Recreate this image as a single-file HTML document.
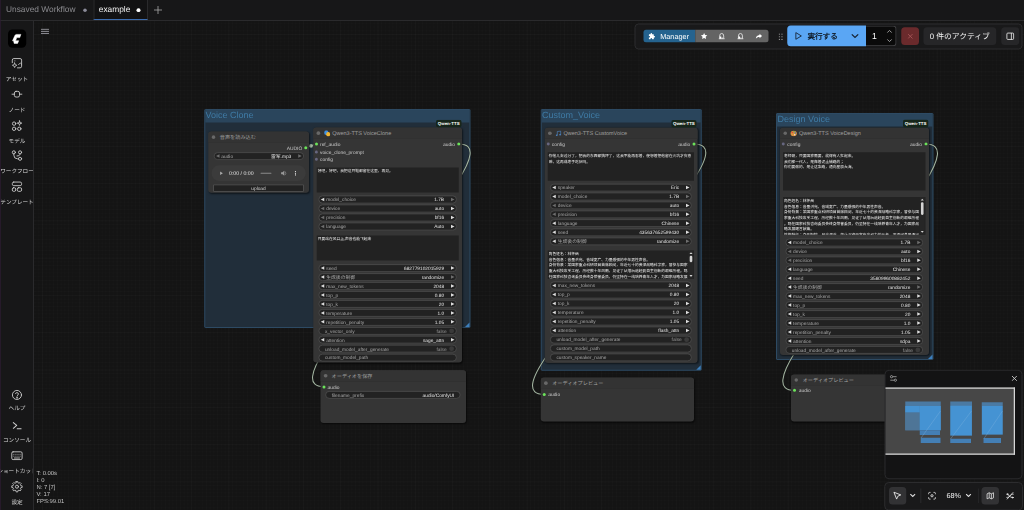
<!DOCTYPE html>
<html lang="ja"><head><meta charset="utf-8"><title>ComfyUI</title>
<style>
*{box-sizing:border-box;margin:0;padding:0}
html,body{width:1024px;height:510px;overflow:hidden;background:#141414}
body{font-family:"Liberation Sans","Noto Sans CJK JP",sans-serif;color:#ddd;position:relative}
#root{position:absolute;left:0;top:0;width:4096px;height:2040px;transform:scale(.25);transform-origin:0 0;overflow:hidden;text-rendering:geometricPrecision}

.abs{position:absolute}
#grid{position:absolute;left:136px;top:84px;width:3960px;height:1956px;
 background-image:linear-gradient(rgba(255,255,255,.012) 4px,transparent 4px),linear-gradient(90deg,rgba(255,255,255,.012) 4px,transparent 4px),linear-gradient(rgba(255,255,255,.010) 4px,transparent 4px),linear-gradient(90deg,rgba(255,255,255,.010) 4px,transparent 4px);
 background-size:149.2px 149.2px,149.2px 149.2px,14.92px 14.92px,14.92px 14.92px;background-position:32px 52px}
#tabs{position:absolute;left:0;top:0;width:4096px;height:84px;background:#171718;border-bottom:4px solid #2a2a2c}
.tab{position:absolute;top:0;height:80px;font-size:33.4px;line-height:76px;white-space:nowrap}
#side{position:absolute;left:0;top:84px;width:136px;height:1956px;background:#171718;border-right:4px solid #2a2a2c;overflow:hidden}
.sl{position:absolute;left:-40px;width:216px;text-align:center;font-size:22.4px;line-height:32px;color:#d8d8d8;white-space:nowrap}
.si{position:absolute;left:43.2px;width:49.6px;height:49.6px}
.si svg{width:49.6px;height:49.6px;display:block;fill:none;stroke:#d0d0d0;stroke-width:1.7;stroke-linecap:round;stroke-linejoin:round}
.group{position:absolute;background:#212e3a;border:4px solid #2d4a63;border-radius:4px}
.gt{position:absolute;left:0;top:0;right:0;background:#2a455c}
.gtt{position:absolute;left:1.6px;white-space:nowrap;color:#3f7ba5;font-size:36px}
.gc{position:absolute;right:0;bottom:0;width:0;height:0;border-style:solid;border-width:0 0 18px 18px;border-color:transparent transparent #3d7fbc transparent}
.node{position:absolute;background:#353535;border-radius:12.8px;box-shadow:3.2px 3.2px 8px rgba(0,0,0,.55)}
.nt{position:absolute;left:0;top:0;right:0;background:#333;border-radius:12.8px 12.8px 0 0;border-bottom:2px solid #2b2b2b}
.ntd{position:absolute;width:14.4px;height:14.4px;border-radius:50%;background:#686868}
.ntt{position:absolute;white-space:nowrap;color:#a0a0a0;font-size:22px;line-height:32px}
.ntt.jp{font-size:20.6px}
.badge{position:absolute;background:#16261a;border-radius:8px;color:#fff;font-weight:bold;font-size:17.6px;line-height:30.4px;text-align:center;white-space:nowrap}
.dot{position:absolute;width:12px;height:12px;border-radius:50%}
.sl_l,.sl_r{position:absolute;white-space:nowrap;font-size:19.6px;line-height:28px;color:#cacaca}
.sl_r{text-align:right}
.w{position:absolute;height:31.2px;border-radius:15.6px;background:#222;border:3px solid #505050;font-size:19.2px;line-height:25.2px;white-space:nowrap}
.w .l{position:absolute;left:27.6px;top:1.4px;color:#a8a8a8}
.w .v{position:absolute;right:47.6px;top:1.4px;color:#e6e6e6}
.w.na .l{left:22.4px}
.w.na .v{right:22px}
.w i{position:absolute;top:5.6px;width:0;height:0;border-style:solid}
.w i.a{left:6px;border-width:7px 14px 7px 0;border-color:transparent #ddd transparent transparent}
.w i.b{right:6px;border-width:7px 0 7px 14px;border-color:transparent transparent transparent #ddd}
.w i.a.d{border-right-color:#6e6e6e}
.w i.b.d{border-left-color:#6e6e6e}
.w .tg{position:absolute;right:8px;top:3.2px;width:18.8px;height:18.8px;border-radius:50%;background:#3a3a3a}
.w.tgw .v{right:37.2px;color:#9c9c9c}
.ta{position:absolute;background:#222;color:#f0f0f0;font-family:"Liberation Sans","Noto Sans CJK SC",sans-serif;font-size:15px;line-height:22.8px;padding:3.8px 3.6px;overflow:hidden;white-space:nowrap}
.sb{position:absolute;right:2.6px;top:0;bottom:0;width:20px;background:#262626}
</style></head>
<body>
<div id="root">
<div id="grid"></div>
<div class="group" style="left:816.8px;top:435.6px;width:1064.8px;height:876.8px"><div class="gt" style="height:50px"></div><div class="gtt" style="top:-3.2px;line-height:48px">Voice Clone</div><div class="gc"></div></div>
<div class="group" style="left:2162.8px;top:435.6px;width:644px;height:1047.2px"><div class="gt" style="height:50px"></div><div class="gtt" style="top:-3.2px;line-height:48px">Custom_Voice</div><div class="gc"></div></div>
<div class="group" style="left:3104px;top:451.6px;width:629.6px;height:988.8px"><div class="gt" style="height:50px"></div><div class="gtt" style="top:-3.2px;line-height:48px">Design Voice</div><div class="gc"></div></div>
<svg class="abs" style="left:0;top:0;width:4096px;height:2040px" viewBox="0 0 1024 510" fill="none"><path d="M458.8 144.0 C528.2 144.0 254.5 386.7 323.9 386.7" stroke="#1a1a1a" stroke-width="1.9" opacity=".5"/><path d="M458.8 144.0 C528.2 144.0 254.5 386.7 323.9 386.7" stroke="#a3b5a1" stroke-width="1.05"/><path d="M694.1 144.0 C767.1 144.0 471.2 394.4 544.2 394.4" stroke="#1a1a1a" stroke-width="1.9" opacity=".5"/><path d="M694.1 144.0 C767.1 144.0 471.2 394.4 544.2 394.4" stroke="#a3b5a1" stroke-width="1.05"/><path d="M925.9 144.0 C995.7 144.0 724.6 390.3 794.4 390.3" stroke="#1a1a1a" stroke-width="1.9" opacity=".5"/><path d="M925.9 144.0 C995.7 144.0 724.6 390.3 794.4 390.3" stroke="#a3b5a1" stroke-width="1.05"/><path d="M305.7 147.8 C308.5 147.8 313.6 144.0 316.4 144.0" stroke="#1a1a1a" stroke-width="1.9" opacity=".5"/><path d="M305.7 147.8 C308.5 147.8 313.6 144.0 316.4 144.0" stroke="#a3b5a1" stroke-width="1.05"/><circle cx="311" cy="145.8" r="1.9" fill="#a3b5a1"/></svg>
<div class="node" style="left:833.2px;top:526.4px;width:402.4px;height:244.8px"><div class="nt" style="height:44.8px"></div><div class="ntd" style="left:13.6px;top:14.8px"></div><div class="ntt jp" style="left:46px;top:7.2px">音声を読み込む</div></div>
<div class="sl_r" style="right:2887.2px;top:578.4px">AUDIO</div>
<div class="dot" style="left:1216.8px;top:585.2px;width:12px;height:12px;background:#6be35a"></div>
<div class="w" style="left:854.8px;top:608.8px;width:360.8px"><i class="a d"></i><span class="l">audio</span><span class="v">雷军.mp3</span><i class="b d"></i></div>
<div class="abs" style="left:846px;top:661.2px;width:376.8px;height:62.8px;border-radius:31.2px;background:#3b3b3b"></div>
<svg class="abs" style="left:846px;top:661.2px;width:376.8px;height:62.8px" viewBox="0 0 94.2 15.7"><path d="M8.6 6.2 L8.6 9.8 L11.4 8Z" fill="#aaa"/><rect x="49" y="7.6" width="11" height="0.9" rx="0.4" fill="#8a8a8a"/><path d="M69.6 7 h1.4 l1.8 -1.5 v5 l-1.8 -1.5 h-1.4z" fill="#999"/><path d="M73.6 6.2 q1.6 1.8 0 3.6" stroke="#999" stroke-width=".6" fill="none"/><circle cx="84" cy="6.3" r=".6" fill="#eee"/><circle cx="84" cy="8" r=".6" fill="#eee"/><circle cx="84" cy="9.7" r=".6" fill="#eee"/></svg>
<div class="abs" style="left:916px;top:678.8px;font-size:20.8px;line-height:28px;color:#e0e0e0;white-space:nowrap">0:00 / 0:00</div>
<div class="abs" style="left:852.8px;top:738px;width:362.4px;height:29.2px;background:#222;border:3px solid #585858"></div><div class="abs" style="left:852.8px;top:738px;width:362.4px;font-size:19.2px;line-height:29.2px;text-align:center;color:#d4d4d4">upload</div>
<div class="node" style="left:1252.8px;top:510.4px;width:595.2px;height:939.2px"><div class="nt" style="height:44.8px"></div><div class="ntd" style="left:13.6px;top:14.8px"></div><div class="ntt" style="left:76px;top:7.2px">Qwen3-TTS VoiceClone</div></div>
<svg class="abs" style="left:1295.6px;top:520.8px;width:25.6px;height:25.6px" viewBox="0 0 6.4 6.4"><ellipse cx="2.3" cy="2.4" rx="2.1" ry="2.3" fill="#3f8fe0"/><ellipse cx="4.2" cy="4" rx="2" ry="2.2" fill="#f2b632"/></svg>
<div class="badge" style="left:1743.6px;top:478.8px;width:102.4px;height:30.4px">Qwen-TTS</div>
<div class="dot" style="left:1259.6px;top:570px;width:12px;height:12px;background:#6be35a"></div>
<div class="sl_l" style="left:1280px;top:561.6px">ref_audio</div>
<div class="dot" style="left:1259.8px;top:602.2px;width:11.6px;height:11.6px;background:#676780"></div>
<div class="sl_l" style="left:1280px;top:593.6px">voice_clone_prompt</div>
<div class="dot" style="left:1259.8px;top:631px;width:11.6px;height:11.6px;background:#676780"></div>
<div class="sl_l" style="left:1280px;top:622.4px">config</div>
<div class="sl_r" style="right:2276px;top:561.6px">audio</div>
<div class="dot" style="left:1829.2px;top:570px;width:12px;height:12px;background:#6be35a"></div>
<div class="ta" style="left:1267.2px;top:669.6px;width:568px;height:100.8px;padding-top:3.8px">好吧，好吧，我把这只鞋都留在这里，再见。</div>
<div class="w" style="left:1274.4px;top:782.4px;width:552.4px"><i class="a"></i><span class="l">model_choice</span><span class="v">1.7B</span><i class="b d"></i></div>
<div class="w" style="left:1274.4px;top:818.4px;width:552.4px"><i class="a d"></i><span class="l">device</span><span class="v">auto</span><i class="b"></i></div>
<div class="w" style="left:1274.4px;top:854.4px;width:552.4px"><i class="a d"></i><span class="l">precision</span><span class="v">bf16</span><i class="b"></i></div>
<div class="w" style="left:1274.4px;top:890.4px;width:552.4px"><i class="a d"></i><span class="l">language</span><span class="v">Auto</span><i class="b"></i></div>
<div class="ta" style="left:1267.2px;top:942px;width:568px;height:100px;padding-top:3.8px">只要站在风口上,声音也能飞起来</div>
<div class="w" style="left:1274.4px;top:1056.8px;width:552.4px"><i class="a"></i><span class="l">seed</span><span class="v">682779102015929</span><i class="b"></i></div>
<div class="w" style="left:1274.4px;top:1092.8px;width:552.4px"><i class="a"></i><span class="l">生成後の制御</span><span class="v">randomize</span><i class="b d"></i></div>
<div class="w" style="left:1274.4px;top:1128.4px;width:552.4px"><i class="a"></i><span class="l">max_new_tokens</span><span class="v">2048</span><i class="b"></i></div>
<div class="w" style="left:1274.4px;top:1164.4px;width:552.4px"><i class="a"></i><span class="l">top_p</span><span class="v">0.80</span><i class="b"></i></div>
<div class="w" style="left:1274.4px;top:1200px;width:552.4px"><i class="a"></i><span class="l">top_k</span><span class="v">20</span><i class="b"></i></div>
<div class="w" style="left:1274.4px;top:1236px;width:552.4px"><i class="a"></i><span class="l">temperature</span><span class="v">1.0</span><i class="b"></i></div>
<div class="w" style="left:1274.4px;top:1271.6px;width:552.4px"><i class="a"></i><span class="l">repetition_penalty</span><span class="v">1.05</span><i class="b"></i></div>
<div class="w na tgw" style="left:1274.4px;top:1307.6px;width:552.4px"><span class="l">x_vector_only</span><span class="v">false</span><span class="tg"></span></div>
<div class="w" style="left:1274.4px;top:1343.2px;width:552.4px"><i class="a"></i><span class="l">attention</span><span class="v">sage_attn</span><i class="b"></i></div>
<div class="w na tgw" style="left:1274.4px;top:1379.2px;width:552.4px"><span class="l">unload_model_after_generate</span><span class="v">false</span><span class="tg"></span></div>
<div class="w na" style="left:1274.4px;top:1414.8px;width:552.4px"><span class="l">custom_model_path</span></div>
<div class="node" style="left:1281.6px;top:1480.8px;width:582.8px;height:210.8px"><div class="nt" style="height:44.8px"></div><div class="ntd" style="left:13.6px;top:14.8px"></div><div class="ntt jp" style="left:44.8px;top:7.2px">オーディオを保存</div></div>
<div class="dot" style="left:1289.6px;top:1541.6px;width:12px;height:12px;background:#6be35a"></div>
<div class="sl_l" style="left:1310.4px;top:1534px">audio</div>
<div class="w na" style="left:1301.2px;top:1564px;width:541.2px"><span class="l">filename_prefix</span><span class="v">audio/ComfyUI</span></div>
<div class="node" style="left:2178.8px;top:511.2px;width:611.6px;height:940.8px"><div class="nt" style="height:44.8px"></div><div class="ntd" style="left:13.6px;top:14.8px"></div><div class="ntt" style="left:75.2px;top:7.2px">Qwen3-TTS CustomVoice</div></div>
<svg class="abs" style="left:2221.6px;top:520.8px;width:25.6px;height:25.6px" viewBox="0 0 6.4 6.4"><path d="M1.8 5 V1.3 L5.2 0.8 V4.5" stroke="#4d86c4" stroke-width=".65" fill="none"/><ellipse cx="1.2" cy="5.1" rx=".95" ry=".75" fill="#4d86c4"/><ellipse cx="4.6" cy="4.6" rx=".95" ry=".75" fill="#4d86c4"/></svg>
<div class="badge" style="left:2685.2px;top:480px;width:100.8px;height:30px">Qwen-TTS</div>
<div class="dot" style="left:2187px;top:570.2px;width:11.6px;height:11.6px;background:#676780"></div>
<div class="sl_l" style="left:2207.2px;top:561.6px">config</div>
<div class="sl_r" style="right:1334.8px;top:561.6px">audio</div>
<div class="dot" style="left:2770.4px;top:570px;width:12px;height:12px;background:#6be35a"></div>
<div class="ta" style="left:2191.2px;top:608.8px;width:585.2px;height:114px;padding-top:3.8px">你他儿太过分了，把我的东西都搞坏了，这我不能再忍着，便想着把他留在火坑才安息<br>嘛，这再成老子吃狱吗。</div>
<div class="w" style="left:2200.4px;top:734.8px;width:566.8px"><i class="a"></i><span class="l">speaker</span><span class="v">Eric</span><i class="b"></i></div>
<div class="w" style="left:2200.4px;top:770.4px;width:566.8px"><i class="a"></i><span class="l">model_choice</span><span class="v">1.7B</span><i class="b d"></i></div>
<div class="w" style="left:2200.4px;top:806px;width:566.8px"><i class="a d"></i><span class="l">device</span><span class="v">auto</span><i class="b"></i></div>
<div class="w" style="left:2200.4px;top:841.6px;width:566.8px"><i class="a d"></i><span class="l">precision</span><span class="v">bf16</span><i class="b"></i></div>
<div class="w" style="left:2200.4px;top:877.2px;width:566.8px"><i class="a"></i><span class="l">language</span><span class="v">Chinese</span><i class="b"></i></div>
<div class="w" style="left:2200.4px;top:913.6px;width:566.8px"><i class="a"></i><span class="l">seed</span><span class="v">435637652599430</span><i class="b"></i></div>
<div class="w" style="left:2200.4px;top:949.6px;width:566.8px"><i class="a"></i><span class="l">生成後の制御</span><span class="v">randomize</span><i class="b d"></i></div>
<div class="ta" style="left:2191.2px;top:1002px;width:585.2px;height:114px;padding-top:2px">角色姓名：林怀岳<br>音色信息：音量洪亮、音域宽广、力量感强的中年男性声音。<br>身份背景：某国家重点科研项目首席顾问，年近七十的资深战略科学家，曾参与国家<br>重大科技攻关工程，历经数十年风雨，见证了从落后追赶到自主创新的艰难历程。现<br>任国家科技咨询委员会终身荣誉委员，仍坚持在一线培养青年人才，为国家战略发展<div class="sb"><svg viewBox="0 0 5 28.5" style="display:block;width:20px;height:114px"><path d="M1 3.600 L2.500 1.700 L4 3.600Z" fill="#d8d8d8"/><rect x="1.200" y="5.300" width="2.600" height="6.4" rx="1.100" fill="#d4d4d4"/><path d="M1 24.6 L2.500 26.4 L4 24.6Z" fill="#d8d8d8"/></svg></div></div>
<div class="w" style="left:2200.4px;top:1126.4px;width:566.8px"><i class="a"></i><span class="l">max_new_tokens</span><span class="v">2048</span><i class="b"></i></div>
<div class="w" style="left:2200.4px;top:1162.4px;width:566.8px"><i class="a"></i><span class="l">top_p</span><span class="v">0.80</span><i class="b"></i></div>
<div class="w" style="left:2200.4px;top:1198.4px;width:566.8px"><i class="a"></i><span class="l">top_k</span><span class="v">20</span><i class="b"></i></div>
<div class="w" style="left:2200.4px;top:1234.4px;width:566.8px"><i class="a"></i><span class="l">temperature</span><span class="v">1.0</span><i class="b"></i></div>
<div class="w" style="left:2200.4px;top:1270.4px;width:566.8px"><i class="a"></i><span class="l">repetition_penalty</span><span class="v">1.05</span><i class="b"></i></div>
<div class="w" style="left:2200.4px;top:1306.4px;width:566.8px"><i class="a"></i><span class="l">attention</span><span class="v">flash_attn</span><i class="b"></i></div>
<div class="w na tgw" style="left:2200.4px;top:1342.8px;width:566.8px"><span class="l">unload_model_after_generate</span><span class="v">false</span><span class="tg"></span></div>
<div class="w na" style="left:2200.4px;top:1378.4px;width:566.8px"><span class="l">custom_model_path</span></div>
<div class="w na" style="left:2200.4px;top:1414px;width:566.8px"><span class="l">custom_speaker_name</span></div>
<div class="node" style="left:2162.8px;top:1510.4px;width:613.6px;height:176px"><div class="nt" style="height:44.8px"></div><div class="ntd" style="left:13.6px;top:14.8px"></div><div class="ntt jp" style="left:46px;top:7.2px">オーディオプレビュー</div></div>
<div class="dot" style="left:2170.8px;top:1571.6px;width:12px;height:12px;background:#6be35a"></div>
<div class="sl_l" style="left:2192.8px;top:1563.2px">audio</div>
<div class="node" style="left:3120px;top:511.2px;width:596px;height:908.4px"><div class="nt" style="height:44.8px"></div><div class="ntd" style="left:13.6px;top:14.8px"></div><div class="ntt" style="left:76px;top:7.2px">Qwen3-TTS VoiceDesign</div></div>
<svg class="abs" style="left:3161.2px;top:520.8px;width:27.2px;height:25.6px" viewBox="0 0 6.8 6.4"><ellipse cx="3.4" cy="3.2" rx="3.2" ry="2.8" fill="#d8913f"/><circle cx="2" cy="2.3" r=".7" fill="#e33"/><circle cx="3.8" cy="1.6" r=".7" fill="#3a6"/><circle cx="5.2" cy="2.8" r=".7" fill="#37c"/><circle cx="4.4" cy="4.5" r=".8" fill="#f3e6d0"/></svg>
<div class="badge" style="left:3612px;top:478.4px;width:100.8px;height:31.2px">Qwen-TTS</div>
<div class="dot" style="left:3127.4px;top:570.2px;width:11.6px;height:11.6px;background:#676780"></div>
<div class="sl_l" style="left:3149.2px;top:561.6px">config</div>
<div class="sl_r" style="right:408px;top:561.6px">audio</div>
<div class="dot" style="left:3697.6px;top:570px;width:12px;height:12px;background:#6be35a"></div>
<div class="ta" style="left:3132px;top:608.8px;width:569.6px;height:153.6px;padding-top:3.8px">老师哥，只要国家需要，就得有人扛起来。<br>我们那一代人，是靠着泥土铺路的；<br>你们要做的，是让这条路，通向星辰大海。</div>
<div class="ta" style="left:3132px;top:788px;width:569.6px;height:151.2px;padding-top:4.2px">角色姓名：林怀岳<br>音色信息：音量洪亮、音域宽广、力量感强的中年男性声音。<br>身份背景：某国家重点科研项目首席顾问，年近七十的资深战略科学家，曾参与国<br>家重大科技攻关工程，历经数十年风雨，见证了从落后追赶到自主创新的艰难历程<br>。现任国家科技咨询委员会终身荣誉委员，仍坚持在一线培养青年人才，为国家战<br>略发展建言献策。<br>性格特征：身形挺拔，目光深邃，举止沉稳而富有亲和力的长者，言语间总是透出<div class="sb"><svg viewBox="0 0 5 37.8" style="display:block;width:20px;height:151.2px"><path d="M1 3.600 L2.500 1.700 L4 3.600Z" fill="#d8d8d8"/><rect x="1.200" y="5.300" width="2.600" height="12.6" rx="1.100" fill="#d4d4d4"/><path d="M1 33.9 L2.500 35.7 L4 33.9Z" fill="#d8d8d8"/></svg></div></div>
<div class="w" style="left:3141.6px;top:954.4px;width:550.4px"><i class="a"></i><span class="l">model_choice</span><span class="v">1.7B</span><i class="b d"></i></div>
<div class="w" style="left:3141.6px;top:990px;width:550.4px"><i class="a d"></i><span class="l">device</span><span class="v">auto</span><i class="b"></i></div>
<div class="w" style="left:3141.6px;top:1025.6px;width:550.4px"><i class="a d"></i><span class="l">precision</span><span class="v">bf16</span><i class="b"></i></div>
<div class="w" style="left:3141.6px;top:1061.6px;width:550.4px"><i class="a"></i><span class="l">language</span><span class="v">Chinese</span><i class="b"></i></div>
<div class="w" style="left:3141.6px;top:1097.2px;width:550.4px"><i class="a"></i><span class="l">seed</span><span class="v">356099600882452</span><i class="b"></i></div>
<div class="w" style="left:3141.6px;top:1132.8px;width:550.4px"><i class="a"></i><span class="l">生成後の制御</span><span class="v">randomize</span><i class="b d"></i></div>
<div class="w" style="left:3141.6px;top:1168.8px;width:550.4px"><i class="a"></i><span class="l">max_new_tokens</span><span class="v">2048</span><i class="b"></i></div>
<div class="w" style="left:3141.6px;top:1204.8px;width:550.4px"><i class="a"></i><span class="l">top_p</span><span class="v">0.80</span><i class="b"></i></div>
<div class="w" style="left:3141.6px;top:1240.8px;width:550.4px"><i class="a"></i><span class="l">top_k</span><span class="v">20</span><i class="b"></i></div>
<div class="w" style="left:3141.6px;top:1276.8px;width:550.4px"><i class="a"></i><span class="l">temperature</span><span class="v">1.0</span><i class="b"></i></div>
<div class="w" style="left:3141.6px;top:1312.4px;width:550.4px"><i class="a"></i><span class="l">repetition_penalty</span><span class="v">1.05</span><i class="b"></i></div>
<div class="w" style="left:3141.6px;top:1348px;width:550.4px"><i class="a"></i><span class="l">attention</span><span class="v">sdpa</span><i class="b"></i></div>
<div class="w na tgw" style="left:3141.6px;top:1383.6px;width:550.4px"><span class="l">unload_model_after_generate</span><span class="v">false</span><span class="tg"></span></div>
<div class="node" style="left:3164px;top:1498px;width:600px;height:188.4px"><div class="nt" style="height:44.8px"></div><div class="ntd" style="left:13.6px;top:14.8px"></div><div class="ntt jp" style="left:46.8px;top:7.2px">オーディオプレビュー</div></div>
<div class="dot" style="left:3171.6px;top:1555.2px;width:12px;height:12px;background:#6be35a"></div>
<div class="sl_l" style="left:3195.2px;top:1546.8px">audio</div>
<div class="abs" style="left:0;top:0;width:3px;height:2040px;background:#2c1c30;z-index:5"></div>
<div id="tabs"><div class="tab" style="left:24px;color:#8a8a8e">Unsaved Workflow</div><div class="abs" style="left:332.8px;top:33.6px;width:14.4px;height:14.4px;border-radius:50%;background:#8b8b99"></div><div class="abs" style="left:374px;top:0;width:218px;height:80px;background:#121213;border-left:4px solid #2a2a2c;border-right:4px solid #2a2a2c;border-bottom:4px solid #3c6db0"></div><div class="tab" style="left:395.2px;color:#f0f0f0">example</div><div class="abs" style="left:546.4px;top:32.8px;width:15.2px;height:15.2px;border-radius:50%;background:#fff"></div><svg class="abs" style="left:614px;top:22px;width:36px;height:36px" viewBox="0 0 9 9"><path d="M4.5 0.5V8.5M0.5 4.5H8.5" stroke="#b0b0b0" stroke-width=".75"/></svg></div>
<div id="side"><div class="abs" style="left:32px;top:34.4px;width:72.8px;height:72.8px;border-radius:18px;background:#000"></div><svg class="abs" style="left:32px;top:34.4px;width:72.8px;height:72.8px" viewBox="0 0 18.2 18.2"><path d="M12.9 4.9 H8.6 Q7.4 4.9 6.9 6 L4.5 11.3 H5.6 L6.1 13.9 H9.6 L10.7 11.2 H7.6 L8.8 8.1 H11.8 Z" fill="#fff" stroke="#fff" stroke-width=".5" stroke-linejoin="round"/></svg><div class="si" style="top:144.4px"><svg viewBox="0 0 24 24"><path d="M3 11V6a3 3 0 0 1 3-3h12a3 3 0 0 1 3 3v12a3 3 0 0 1-3 3h-5"/><path d="M7.500 11.500l1.300 3.200 3.200 1.300-3.200 1.300L7.500 20.500l-1.300-3.200L3 16l3.200-1.300z" stroke-width="1.400"/><path d="M21 14l-2.500-2.500L15 15" stroke-width="1.500"/><path d="M8 7.500h.1" stroke-width="1.800"/></svg></div><div class="sl" style="top:214.8px">アセット</div><div class="si" style="top:268.4px"><svg viewBox="0 0 24 24"><rect x="7" y="6.5" width="10" height="11" rx="3.2"/><path d="M2.5 12H7M17 12h4.5" /></svg></div><div class="sl" style="top:339.6px">ノード</div><div class="si" style="top:394px"><svg viewBox="0 0 24 24"><circle cx="6.5" cy="8" r="3.3"/><circle cx="6.5" cy="18" r="3.3"/><circle cx="16.5" cy="18" r="3.3"/><path d="M17 2.500l1 3.500L21.500 7 18 8l-1 3.500L16 8 12.500 7 16 6z" stroke-width="1.5"/></svg></div><div class="sl" style="top:463.6px">モデル</div><div class="si" style="top:514px"><svg viewBox="0 0 24 24"><circle cx="6" cy="5.500" r="3"/><circle cx="18" cy="5.500" r="3"/><circle cx="18" cy="18" r="3"/><path d="M6 8.500V11a7 7 0 0 0 7 7h2M18 8.500c0 3-2 4-6 4"/></svg></div><div class="sl" style="top:586.4px">ワークフロー</div><div class="si" style="top:638px"><svg viewBox="0 0 24 24"><rect x="3" y="3" width="18" height="7" rx="2.800"/><rect x="3" y="14" width="6.500" height="7" rx="2.500"/><rect x="12.500" y="14" width="8.500" height="7" rx="2.500"/></svg></div><div class="sl" style="top:709.2px">テンプレート</div><div class="si" style="top:1471.2px"><svg viewBox="0 0 24 24"><circle cx="12" cy="12" r="8.800"/><path d="M9.2 9.2a3 3 0 0 1 5.7 1c0 2-2.9 2.4-2.9 4.2"/><circle cx="12" cy="17.6" r=".6" fill="#d0d0d0"/></svg></div><div class="sl" style="top:1533.2px">ヘルプ</div><div class="si" style="top:1594px"><svg viewBox="0 0 24 24"><path d="M5 6l6.500 5.500L5 17" stroke-width="2"/><path d="M12.500 18h7.500" stroke-width="2"/></svg></div><div class="sl" style="top:1660px">コンソール</div><div class="si" style="top:1715.2px"><svg viewBox="0 0 24 24"><rect x="2" y="4" width="20" height="15" rx="2.5"/><path d="M6 9h.1M10 9h.1M14 9h.1M18 9h.1M6 12.5h.1M10 12.5h.1M14 12.5h.1M18 12.5h.1M7 16h10" stroke-width="1.6"/></svg></div><div class="sl" style="top:1784px">ショートカット</div><div class="si" style="top:1838px"><svg viewBox="0 0 24 24"><circle cx="12" cy="12" r="3"/><path d="M10.37 1.93L13.63 1.93L13.78 4.41L16.11 5.37L17.97 3.73L20.27 6.03L18.63 7.89L19.59 10.22L22.07 10.37L22.07 13.63L19.59 13.78L18.63 16.11L20.27 17.97L17.97 20.27L16.11 18.63L13.78 19.59L13.63 22.07L10.37 22.07L10.22 19.59L7.89 18.63L6.03 20.27L3.73 17.97L5.37 16.11L4.41 13.78L1.93 13.63L1.93 10.37L4.41 10.22L5.37 7.89L3.73 6.03L6.03 3.73L7.89 5.37L10.22 4.41Z" stroke-width="1.600"/></svg></div><div class="sl" style="top:1909.2px">設定</div></div>
<svg class="abs" style="left:163.6px;top:113.2px;width:32px;height:25.6px" viewBox="0 0 8 6.4"><path d="M0 1.050H8M0 3.130H8M0 5.200H8" stroke="#9c9ca4" stroke-width=".9"/></svg>
<div class="abs" style="left:145.6px;top:1876.8px;font-size:23.6px;line-height:28.8px;color:#c4c4c4;white-space:nowrap">T: 0.00s<br>I: 0<br>N: 7 [7]<br>V: 17<br>FPS:99.01</div>
<div class="abs" style="left:2538px;top:93.6px;width:1552px;height:104.8px;background:#19191a;border:4px solid #2c2c2e;border-radius:16px"></div><div class="abs" style="left:2574px;top:118.8px;width:206.8px;height:50.4px;background:#25638f;border-radius:10px 0 0 10px"></div><svg class="abs" style="left:2592.8px;top:129.6px;width:29.6px;height:29.6px" viewBox="0 0 24 24"><path d="M10 2a2.500 2.500 0 0 1 2.500 2.500V6H17a1 1 0 0 1 1 1v4.500h1.500a2.500 2.500 0 0 1 0 5H18V21a1 1 0 0 1-1 1h-4.500v-1.500a2.500 2.500 0 0 0-5 0V22H3a1 1 0 0 1-1-1v-4.500h1.500a2.500 2.500 0 0 0 0-5H2V7a1 1 0 0 1 1-1h4.500V4.500A2.500 2.500 0 0 1 10 2z" fill="#fff"/></svg><div class="abs" style="left:2640.8px;top:129.2px;font-size:29.2px;line-height:32px;color:#fff;white-space:nowrap">Manager</div><div class="abs" style="left:2780.8px;top:118.8px;width:293.6px;height:50.4px;background:#646464;border-radius:0 10px 10px 0"></div><svg class="abs" style="left:2802px;top:129.6px;width:28.8px;height:28.8px" viewBox="0 0 24 24"><path d="M12 1.500l3.200 6.900 7.500.900-5.500 5.200 1.400 7.500L12 18.300 5.400 22l1.400-7.500L1.300 9.300l7.500-.9z" fill="#fff"/></svg><svg class="abs" style="left:2872px;top:129.6px;width:29.6px;height:29.6px" viewBox="0 0 24 24"><path d="M5.500 20V11.500a6.500 8.500 0 0 1 13 0V20M2.500 20.500h19" fill="none" stroke="#fff" stroke-width="2.300"/><path d="M5.500 13h5v7h-5zM12 16.500h3V20h-3z" fill="#fff"/></svg><svg class="abs" style="left:2946.8px;top:129.6px;width:29.6px;height:29.6px" viewBox="0 0 24 24"><path d="M5.500 20V11.500a6.500 8.500 0 0 1 13 0V20M2.500 20.500h19" fill="none" stroke="#fff" stroke-width="2.300"/><path d="M5.500 13h5v7h-5zM12 16.500h3V20h-3z" fill="#fff"/></svg><svg class="abs" style="left:3021.2px;top:129.6px;width:29.6px;height:29.6px" viewBox="0 0 24 24"><path d="M14 4l8 7.500-8 7.500v-4.500C8 14.500 4.500 16 2 20c.500-6 3.500-10.500 12-11.500z" fill="#fff"/></svg><svg class="abs" style="left:3114.4px;top:133.2px;width:17.2px;height:28px" viewBox="0 0 4.300 7"><circle cx="0.8" cy="0.8" r=".62" fill="#a8a8a8"/><circle cx="0.8" cy="3.5" r=".62" fill="#a8a8a8"/><circle cx="0.8" cy="6.2" r=".62" fill="#a8a8a8"/><circle cx="3.5" cy="0.8" r=".62" fill="#a8a8a8"/><circle cx="3.5" cy="3.5" r=".62" fill="#a8a8a8"/><circle cx="3.5" cy="6.2" r=".62" fill="#a8a8a8"/></svg><div class="abs" style="left:3149.2px;top:101.6px;width:314.4px;height:83.2px;background:#5aa6f4;border-radius:14px 0 0 14px"></div><svg class="abs" style="left:3174.4px;top:124.8px;width:37.6px;height:37.6px" viewBox="0 0 24 24"><path d="M6 3.500l14 8.500-14 8.500z" fill="none" stroke="#15202e" stroke-width="2.200" stroke-linejoin="round"/></svg><div class="abs" style="left:3229.6px;top:124px;font-size:30.4px;line-height:40px;color:#0c141c;white-space:nowrap;-webkit-text-stroke:0.88px #0c141c">実行する</div><svg class="abs" style="left:3403.6px;top:133.6px;width:32px;height:20px" viewBox="0 0 8 5"><path d="M.8.8L4 4 7.200.8" fill="none" stroke="#15202e" stroke-width="1.200"/></svg><div class="abs" style="left:3463.6px;top:101.6px;width:122.4px;height:83.2px;background:#0a0a0a;border:4px solid #424244;border-left:none;border-radius:0 14px 14px 0"></div><div class="abs" style="left:3488.4px;top:121.6px;font-size:34.4px;line-height:44px;color:#fff">1</div><svg class="abs" style="left:3546.4px;top:115.6px;width:24px;height:56px" viewBox="0 0 6 14"><path d="M.8 3.600L3 1.400 5.200 3.600M.8 10.400L3 12.600 5.200 10.400" fill="none" stroke="#aaa" stroke-width=".9"/></svg><div class="abs" style="left:3605.2px;top:109.2px;width:70.8px;height:70.8px;background:#6a2a2c;border-radius:14px"></div><svg class="abs" style="left:3629.6px;top:133.6px;width:22.4px;height:22.4px" viewBox="0 0 5.600 5.600"><path d="M.6.6L5 5M5 .6L.6 5" stroke="#a55558" stroke-width=".9"/></svg><div class="abs" style="left:3694.4px;top:109.2px;width:290.8px;height:70.8px;background:#262628;border-radius:14px"></div><div class="abs" style="left:3718.8px;top:124.8px;font-size:31.2px;line-height:40px;color:#f2f2f2;white-space:nowrap">0 件のアクティブ</div><div class="abs" style="left:4005.2px;top:109.2px;width:72px;height:70.8px;background:#262628;border-radius:14px"></div><svg class="abs" style="left:4023.2px;top:127.2px;width:36px;height:36px" viewBox="0 0 24 24"><rect x="3" y="3.500" width="18" height="17" rx="2.500" fill="none" stroke="#eee" stroke-width="2.200"/><path d="M15 3.500v17" stroke="#eee" stroke-width="2.200"/></svg>
<div class="abs" style="left:3538.4px;top:1478.8px;width:552px;height:438px;background:#131314;border:4px solid #2a2a2c;border-radius:18px"></div><svg class="abs" style="left:3556.8px;top:1497.2px;width:33.6px;height:33.6px" viewBox="0 0 24 24" fill="none" stroke="#c8c8c8" stroke-width="1.900"><path d="M10.500 7h10.500M3 17h10.500"/><circle cx="6.500" cy="7" r="3.200"/><circle cx="17.500" cy="17" r="3.200"/></svg><svg class="abs" style="left:4045.6px;top:1502.4px;width:23.2px;height:23.2px" viewBox="0 0 5.800 5.800"><path d="M.5.5L5.300 5.300M5.300.5L.5 5.300" stroke="#ccc" stroke-width=".9"/></svg><div class="abs" style="left:3542.4px;top:1549.6px;width:517.2px;height:269.6px;background:#474747;border:5px solid #d6d6d6;border-left:none"></div><div class="abs" style="left:3621.2px;top:1606.4px;width:141.6px;height:114.4px;background:#4b7aa3;opacity:1"></div><div class="abs" style="left:3621.2px;top:1624px;width:58px;height:26.4px;background:#4593d3;opacity:1"></div><div class="abs" style="left:3621.2px;top:1650.4px;width:58px;height:70.4px;background:#4e7597;opacity:1"></div><div class="abs" style="left:3679.2px;top:1624px;width:83.6px;height:96.8px;background:#4593d3;opacity:1"></div><div class="abs" style="left:3679.2px;top:1720.8px;width:81.2px;height:19.2px;background:#447fb5;opacity:1"></div><div class="abs" style="left:3683.2px;top:1750.8px;width:78.4px;height:20.8px;background:#447fb5;opacity:1"></div><div class="abs" style="left:3800.8px;top:1606.4px;width:87.2px;height:136.4px;background:#4b7aa3;opacity:1"></div><div class="abs" style="left:3801.6px;top:1623.2px;width:85.6px;height:117.6px;background:#4593d3;opacity:1"></div><div class="abs" style="left:3800.8px;top:1754.8px;width:82.8px;height:16.8px;background:#447fb5;opacity:1"></div><div class="abs" style="left:3926.8px;top:1608.8px;width:84.4px;height:130px;background:#4b7aa3;opacity:1"></div><div class="abs" style="left:3927.6px;top:1624px;width:82.8px;height:112.8px;background:#4593d3;opacity:1"></div><div class="abs" style="left:3934.4px;top:1751.6px;width:69.6px;height:20px;background:#447fb5;opacity:1"></div><svg class="abs" style="left:3536px;top:1548px;width:524px;height:272px" viewBox="884 387 131 68" fill="none" stroke="#7fb2e0" stroke-width=".45" opacity=".8"><path d="M940.5 411L921 438M971.500 411L950.500 439M1002.500 411L984 438.500"/></svg>
<div class="abs" style="left:3537.2px;top:1927.6px;width:554.4px;height:114.8px;background:#19191a;border:4px solid #2c2c2e;border-radius:18px"></div><div class="abs" style="left:3555.6px;top:1948px;width:69.6px;height:69.6px;background:#323234;border-radius:14px"></div><svg class="abs" style="left:3569.2px;top:1962.8px;width:40px;height:40px" viewBox="0 0 24 24"><path d="M4 3.500l16.500 6.500-7 3L10.500 20z" fill="none" stroke="#eee" stroke-width="2.100" stroke-linejoin="round"/></svg><svg class="abs" style="left:3639.2px;top:1974.4px;width:24px;height:16px" viewBox="0 0 6 4"><path d="M.6.600L3 3 5.400.6" fill="none" stroke="#ddd" stroke-width="1.100"/></svg><div class="abs" style="left:3682.4px;top:1954px;width:2.8px;height:58px;background:#303032"></div><svg class="abs" style="left:3710.4px;top:1964.8px;width:36px;height:36px" viewBox="0 0 24 24" fill="none" stroke="#e8e8e8" stroke-width="2.300"><path d="M3 8V5.500A2.500 2.500 0 0 1 5.500 3H8M16 3h2.500A2.500 2.500 0 0 1 21 5.500V8M21 16v2.500a2.500 2.500 0 0 1-2.500 2.500H16M8 21H5.500A2.500 2.500 0 0 1 3 18.500V16"/><circle cx="12" cy="12" r="3"/></svg><div class="abs" style="left:3786.4px;top:1965.2px;font-size:28.8px;line-height:36px;color:#f0f0f0;white-space:nowrap">68%</div><svg class="abs" style="left:3862.4px;top:1974.4px;width:24px;height:16px" viewBox="0 0 6 4"><path d="M.6.600L3 3 5.400.6" fill="none" stroke="#ddd" stroke-width="1.100"/></svg><div class="abs" style="left:3913.6px;top:1954px;width:2.8px;height:58px;background:#303032"></div><div class="abs" style="left:3926px;top:1948px;width:69.6px;height:69.6px;background:#323234;border-radius:14px"></div><svg class="abs" style="left:3943.6px;top:1966px;width:34.4px;height:34.4px" viewBox="0 0 24 24" fill="none" stroke="#eee" stroke-width="2.100" stroke-linejoin="round"><path d="M3 6.500l6-3 6 3 6-3v14l-6 3-6-3-6 3zM9 3.500v14M15 6.500v14"/></svg><svg class="abs" style="left:4022.8px;top:1966px;width:34.4px;height:34.4px" viewBox="0 0 24 24" fill="none" stroke="#eee" stroke-width="2" stroke-linecap="round"><path d="M3 7.500c7 0 5 9.500 18 9.500M3 16.500c4.500 0 6-1.500 8-3.500M13.500 10.500c2-1.800 4-3 7.500-3M4 21L20 3" stroke-width="2.300"/><circle cx="5" cy="7.500" r="1.500"/><circle cx="19" cy="17" r="1.500"/></svg>
</div>
</body></html>
